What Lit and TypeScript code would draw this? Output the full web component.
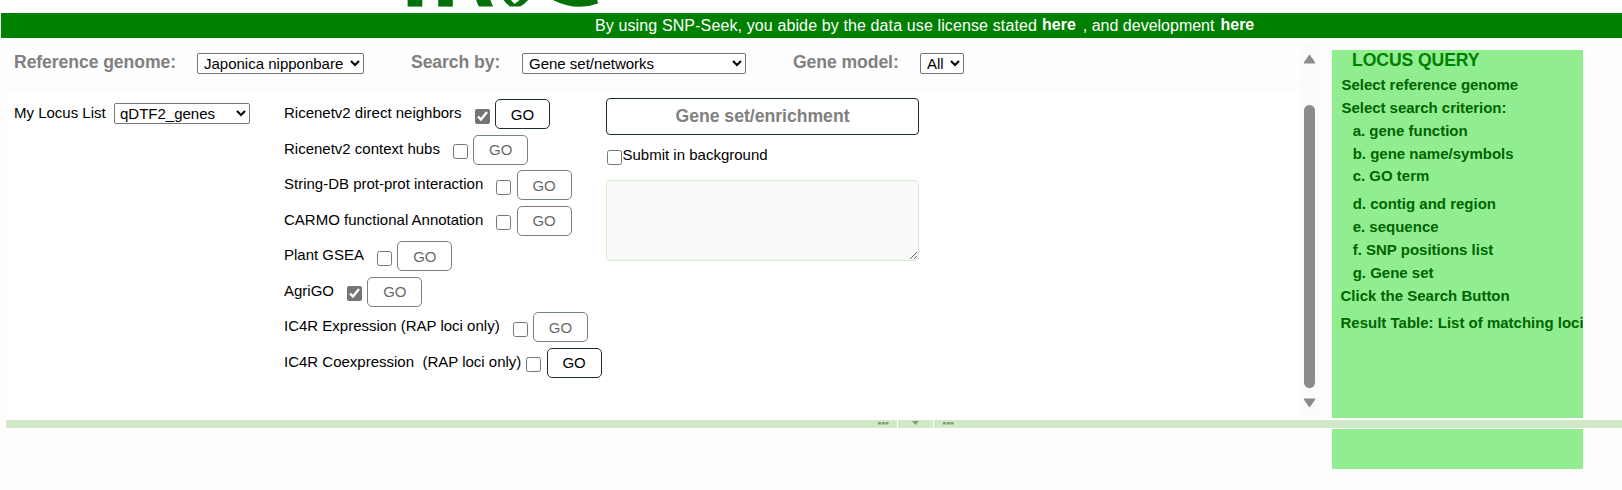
import { LitElement, html, css } from "lit";
import { customElement } from "lit/decorators.js";
import { classMap } from "lit/directives/class-map.js";

interface Tool {
  label: string;
  checked: boolean;
  enabled: boolean;
  tight?: boolean;
}

const TOOLS: Tool[] = [
  { label: "Ricenetv2 direct neighbors", checked: true, enabled: true },
  { label: "Ricenetv2 context hubs", checked: false, enabled: false },
  { label: "String-DB prot-prot interaction", checked: false, enabled: false },
  { label: "CARMO functional Annotation", checked: false, enabled: false },
  { label: "Plant GSEA", checked: false, enabled: false },
  { label: "AgriGO", checked: true, enabled: false },
  { label: "IC4R Expression (RAP loci only)", checked: false, enabled: false },
  { label: "IC4R Coexpression \u00a0(RAP loci only)", checked: false, enabled: true, tight: true },
];

const HELP: { text: string; kind: string }[] = [
  { text: "Select reference genome", kind: "top" },
  { text: "Select search criterion:", kind: "top" },
  { text: "a. gene function", kind: "sub" },
  { text: "b. gene name/symbols", kind: "sub" },
  { text: "c. GO term", kind: "sub" },
  { text: "d. contig and region", kind: "sub spaced" },
  { text: "e. sequence", kind: "sub" },
  { text: "f. SNP positions list", kind: "sub" },
  { text: "g. Gene set", kind: "sub" },
  { text: "Click the Search Button", kind: "end" },
  { text: "Result Table: List of matching loci", kind: "end spaced" },
];

@customElement("app-root")
export class AppRoot extends LitElement {
  static styles = css`
    :host {
      display: block;
      width: 1622px;
      height: 490px;
      overflow: hidden;
      background: #fff;
      font: 15px/17px "Liberation Sans", Arial, sans-serif;
      color: #000;
    }
    * { box-sizing: border-box; }
    .logo { display: block; height: 13px; padding-left: 400px; }
    .logo svg { display: block; }
    .notice {
      height: 25px;
      margin-left: 1px;
      padding-left: 594px;
      background: #008000;
      color: #fff;
      font-size: 16px;
      line-height: 26px;
      display: flex;
      white-space: pre;
    }
    .notice .lead { letter-spacing: 0.12px; }
    .notice b { line-height: 24px; }
    .notice .first { margin: 0 7px 0 5px; }
    .notice .second { margin-left: 6px; }
    .page { margin-left: 1px; height: 452px; background: #fdfdfd; padding-top: 6px; }
    .upper { display: flex; height: 375px; padding-left: 6px; }
    .main { width: 1293px; height: 372px; background: #fff; }
    .filters {
      display: flex;
      height: 39px;
      padding: 9px 0 0 7px;
      align-items: flex-start;
      background: #fefefe;
    }
    .filters label {
      color: #808080;
      font-weight: bold;
      font-size: 17.6px;
      line-height: 20px;
      letter-spacing: -0.08px;
      margin-top: -1px;
    }
    select {
      font: 15px "Liberation Sans", Arial, sans-serif;
      height: 21px;
      margin: 0;
      padding: 0 0 0 2px;
      color: #000;
      background: #fff;
      border: 1px solid #767676;
      border-radius: 2px;
    }
    .f1 { width: 183px; }
    .f2 { width: 111px; }
    .f3 { width: 127px; }
    .s1 { width: 167px; margin-right: 47px; }
    .s2 { width: 224px; margin-right: 47px; }
    .s3 { width: 44px; }
    .band { height: 10px; background: #fdfdfd; }
    .body { display: flex; padding: 5px 0 0 7px; align-items: flex-start; }
    .locus { width: 270px; display: flex; padding-top: 5px; }
    .locus label { width: 100px; padding-top: 1px; }
    .locus select { width: 136px; padding-left: 1px; }
    .tools { width: 322px; padding-top: 1px; }
    .tool { height: 35.5px; display: flex; align-items: flex-start; white-space: nowrap; }
    .tool .name { margin: 5px 13px 0 0; }
    .tool.tight .name { margin-right: 5px; }
    input[type="checkbox"] { width: 15px; height: 15px; margin: 0; accent-color: #757575; flex: none; }
    .tool input { margin: 9.5px 5.3px 0 0; }
    button {
      font: 15px "Liberation Sans", Arial, sans-serif;
      background: #fff;
      border: 1px solid #1b3320;
      border-radius: 5px;
      color: #000;
      padding: 0;
      margin: 0;
    }
    .go { width: 55px; height: 30px; }
    .go.off { opacity: 0.6; }
    .run { width: 313px; display: flex; flex-direction: column; }
    .enrich { height: 37px; font-weight: bold; font-size: 17.6px; color: #808080; border-radius: 4px; }
    .bg { display: flex; margin-top: 11px; height: 34px; }
    .bg input { margin: 4px 1px 0 0.5px; }
    textarea {
      height: 81px;
      width: 313px;
      margin: 0;
      background: #fafafa;
      border: 1px solid #d0f0c8;
      border-radius: 4px;
    }
    .scroll {
      width: 19px;
      height: 372px;
      background: #fbfbfb;
      display: flex;
      flex-direction: column;
      align-items: center;
      padding-top: 10px;
    }
    .thumb { width: 11px; height: 283px; border-radius: 6px; background: #8b8b8b; margin: 41px 0 10px; flex: none; }
    .scroll svg { display: block; flex: none; }
    .help {
      width: 251px;
      height: 368px;
      margin: 6px 0 0 13px;
      background: #90ee90;
      overflow: hidden;
      white-space: nowrap;
      font-weight: bold;
      color: #006400;
    }
    .help h2 { margin: 0 0 6px 20px; padding-top: 1px; font-size: 17.6px; line-height: 19px; color: #008000; letter-spacing: -0.08px; }
    .line { height: 22.85px; padding-left: 9.5px; }
    .line.top { letter-spacing: -0.04px; }
    .line.sub { padding-left: 20.7px; }
    .line.end { padding-left: 8.5px; }
    .line.spaced { margin-top: 5px; }
    .splitter {
      height: 10px;
      margin-left: 5px;
      background: #d0eac8;
      border: solid #fff;
      border-width: 1px 0;
      padding-left: 872px;
    }
    .splitter svg { display: block; }
    .rest { width: 251px; height: 40px; margin-left: 1331px; background: #90ee90; }
  `;

  render() {
    return html`
      <div class="logo">
        <svg width="210" height="8" viewBox="0 0 210 8" fill="#04700a">
          <rect x="7.6" y="-2" width="14.7" height="8.6" />
          <rect x="38.2" y="-2" width="14.6" height="8.6" />
          <path d="M76-1H90L93 6.6H79Q77.3 4 76-1Z" />
          <path d="M103-1H110L114.500 4L121-1H129Q125 4 120 6.600H110Q105 3 103-1Z" />
          <path d="M151-1H197L198 3.500Q175 12 151-1Z" />
        </svg>
      </div>
      <div class="notice"><span class="lead">By using SNP-Seek, you abide by the data use license stated</span><b class="first">here</b><span>, and development</span><b class="second">here</b></div>
      <div class="page">
        <div class="upper">
          <div class="main">
            <div class="filters">
              <label class="f1">Reference genome:</label>
              <select class="s1"><option>Japonica nipponbare</option></select>
              <label class="f2">Search by:</label>
              <select class="s2"><option>Gene set/networks</option></select>
              <label class="f3">Gene model:</label>
              <select class="s3"><option>All</option></select>
            </div>
            <div class="band"></div>
            <div class="body">
              <div class="locus">
                <label>My Locus List</label>
                <select><option>qDTF2_genes</option></select>
              </div>
              <div class="tools">
                ${TOOLS.map(
                  (t) => html`<div class=${classMap({ tool: true, tight: !!t.tight })}>
                    <span class="name">${t.label}</span>
                    <input type="checkbox" .checked=${t.checked} />
                    <button class=${classMap({ go: true, off: !t.enabled })}>GO</button>
                  </div>`
                )}
              </div>
              <div class="run">
                <button class="enrich">Gene set/enrichment</button>
                <div class="bg"><input type="checkbox" /><label>Submit in background</label></div>
                <textarea></textarea>
              </div>
            </div>
          </div>
          <div class="scroll">
            <svg width="13" height="10" viewBox="0 0 13 10"><path d="M6.500 1L12 9H1Z" fill="#8b8b8b" stroke="#8b8b8b" stroke-linejoin="round" /></svg>
            <div class="thumb"></div>
            <svg width="13" height="10" viewBox="0 0 13 10"><path d="M6.500 9L12 1H1Z" fill="#8b8b8b" stroke="#8b8b8b" stroke-linejoin="round" /></svg>
          </div>
          <div class="help">
            <h2>LOCUS QUERY</h2>
            ${HELP.map((h) => html`<div class="line ${h.kind}">${h.text}</div>`)}
          </div>
        </div>
        <div class="splitter">
          <svg width="80" height="8" viewBox="0 0 80 8" fill="#7f9d66">
            <path d="M0 2h3v2.500h-3zM3.800 2h3v2.500h-3zM7.500 2h3v2.500h-3z" />
            <path d="M65 2h3v2.500h-3zM68.800 2h3v2.500h-3zM72.500 2h3v2.500h-3z" />
            <path d="M34 1H41L37.500 5Z" />
            <path d="M19 0h1v8h-1zM55 0h1v8h-1z" fill="#fff" />
          </svg>
        </div>
        <div class="rest"></div>
      </div>
    `;
  }
}
